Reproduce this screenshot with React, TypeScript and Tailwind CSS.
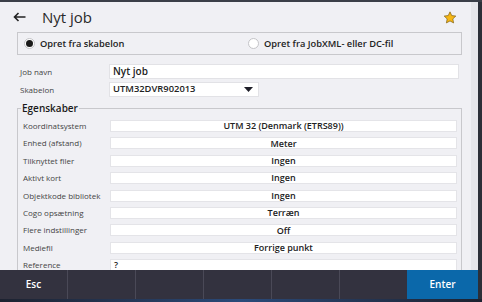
import React from "react";

const font = { fontFamily: '"Open Sans", "Noto Sans", sans-serif' };

const props = [
  { label: "Koordinatsystem", value: "UTM 32 (Denmark (ETRS89))" },
  { label: "Enhed (afstand)", value: "Meter" },
  { label: "Tilknyttet filer", value: "Ingen" },
  { label: "Aktivt kort", value: "Ingen" },
  { label: "Objektkode bibliotek", value: "Ingen" },
  { label: "Cogo opsætning", value: "Terræn" },
  { label: "Flere indstillinger", value: "Off" },
  { label: "Mediefil", value: "Forrige punkt" },
];

const Radio = ({ checked, label }: { checked?: boolean; label: string }) => (
  <div className="flex items-center gap-[5px]">
    <span className="flex h-[11px] w-[11px] items-center justify-center rounded-full border border-[#c4c4c8] bg-white">
      {checked && <span className="h-[7px] w-[7px] rounded-full bg-[#1a1a1a]" />}
    </span>
    <span className="text-[9.3px] font-semibold text-[#222]">{label}</span>
  </div>
);

export default function App() {
  return (
    <div className="flex h-[302px] w-[482px] flex-col overflow-hidden bg-[#262a36]" style={font}>
      <div className="h-[2px] bg-[#3b3f48]" />
      <div className="flex">
        <div className="flex h-[297px] w-[478px] flex-col bg-[#f0f0f4]">
          <div className="flex min-h-0 flex-1">
            <div className="flex min-w-0 flex-1 flex-col overflow-hidden">
              {/* Header */}
              <div className="flex h-[30px] shrink-0 items-center">
                <svg className="ml-[13px]" width="13" height="10" viewBox="0 0 13 10">
                  <path d="M12.5 5H1.5M5.5 1L1.5 5L5.5 9" fill="none" stroke="#222" strokeWidth="1.6" />
                </svg>
                <span className="ml-[16px] text-[15px] text-[#2a2a2a]">Nyt job</span>
                <svg className="ml-auto mr-[14px]" width="14" height="13" viewBox="0 0 24 23">
                  <path
                    d="M12 1.5l3.1 6.6 7.2.9-5.3 5 1.4 7.1L12 17.6l-6.4 3.5L7 14 1.7 9l7.2-.9z"
                    fill="#f6b715"
                    stroke="#7a5a10"
                    strokeWidth="1.2"
                    strokeLinejoin="round"
                  />
                </svg>
              </div>

              {/* Source choice */}
              <div className="ml-[17px] flex h-[23px] w-[445px] shrink-0 items-center border border-[#c8c8cc] pl-[6px]">
                <div className="w-[224px]">
                  <Radio checked label="Opret fra skabelon" />
                </div>
                <Radio label="Opret fra JobXML- eller DC-fil" />
              </div>

              {/* Job fields */}
              <div className="mt-[9px] flex h-[15px] shrink-0 items-center">
                <span className="w-[109px] pl-[20px] text-[8px] text-[#444]">Job navn</span>
                <div className="flex h-[15px] w-[350px] items-center border border-[#e2e2e6] bg-white pl-[3px] text-[10px] font-semibold text-[#222]">
                  Nyt job
                </div>
              </div>
              <div className="mt-[3px] flex h-[15px] shrink-0 items-center">
                <span className="w-[109px] pl-[20px] text-[8px] text-[#444]">Skabelon</span>
                <div className="flex h-[15px] w-[150px] items-center justify-between border border-[#e2e2e6] bg-white pl-[3px] pr-[5px] text-[9.4px] font-semibold text-[#222]">
                  UTM32DVR902013
                  <svg width="9" height="5" viewBox="0 0 9 5">
                    <path d="M0 0H9L4.5 5z" fill="#1e1e28" />
                  </svg>
                </div>
              </div>

              {/* Properties */}
              <fieldset className="ml-[17px] mt-[4px] w-[445px] shrink-0 border border-[#c8c8cc] pb-[10px]">
                <legend className="ml-[3px] px-[1px] text-[10px] font-semibold leading-[14px] text-[#1a1a1a]">
                  Egenskaber
                </legend>
                <div className="mt-[5px] flex flex-col gap-[5.4px]">
                  {props.map((p) => (
                    <div key={p.label} className="flex h-[12px] items-center">
                      <span className="w-[92px] pl-[5px] text-[8px] text-[#444]">{p.label}</span>
                      <div className="flex h-[12px] w-[347px] items-center justify-center border border-[#e4e4e8] bg-white text-[9px] font-semibold text-[#222]">
                        {p.value}
                      </div>
                    </div>
                  ))}
                  <div className="flex h-[12px] items-center">
                    <span className="w-[92px] pl-[5px] text-[8px] text-[#444]">Reference</span>
                    <div className="flex h-[12px] w-[347px] items-center border border-[#e4e4e8] bg-white pl-[3px] text-[9px] font-semibold text-[#222]">
                      ?
                    </div>
                  </div>
                </div>
              </fieldset>
            </div>
            {/* Scrollbar */}
            <div className="w-[7px] bg-[#e6e6ea]" />
          </div>

          {/* Softkey bar */}
          <div className="flex h-[29px] shrink-0 bg-[#33323f] text-[10px] font-semibold text-white">
            <div className="flex w-[68px] items-center justify-center border-r border-[#4a4957]">Esc</div>
            <div className="w-[68px] border-r border-[#4a4957]" />
            <div className="w-[68px] border-r border-[#4a4957]" />
            <div className="w-[68px] border-r border-[#4a4957]" />
            <div className="w-[68px] border-r border-[#4a4957]" />
            <div className="w-[67px]" />
            <div className="flex flex-1 items-center justify-center bg-[#0b68aa]">Enter</div>
          </div>
        </div>
        <div className="flex-1 bg-[#2c2f38]" />
      </div>
      <div className="flex-1 bg-gradient-to-r from-[#1d2230] via-[#2a4a7a] to-[#1d2230]" />
    </div>
  );
}
